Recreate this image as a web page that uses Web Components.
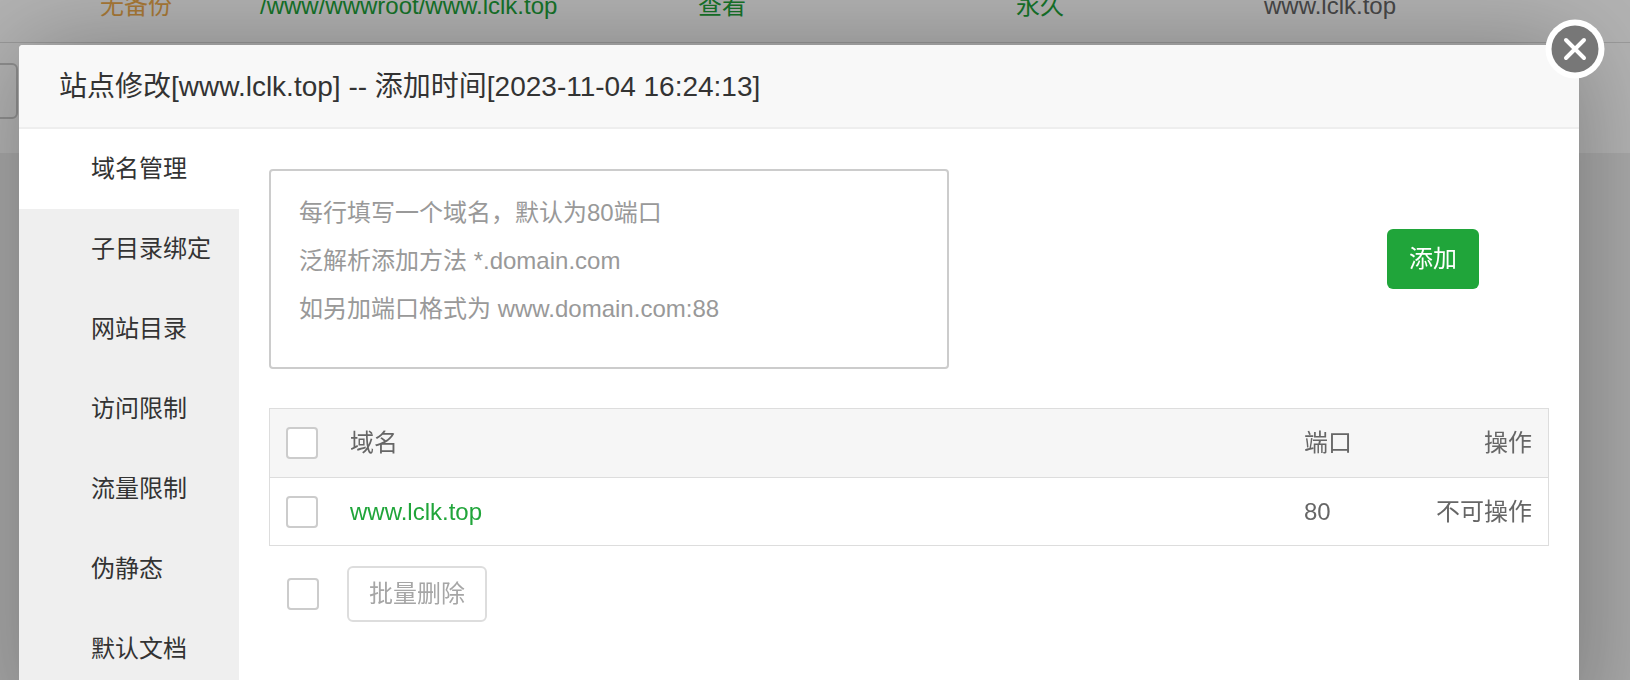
<!DOCTYPE html>
<html lang="zh-CN">
<head>
<meta charset="UTF-8">
<meta name="viewport" content="width=device-width, initial-scale=1.0">
<title>网站管理</title>
<style>
  body {
    margin: 0;
    height: 100vh;
    overflow: hidden;
    background: #f0f0f0;
    color: #666;
    font: 24px/48px "Liberation Sans", "Noto Sans CJK SC", sans-serif;
  }
</style>
</head>
<body>
  <site-list></site-list>
  <modal-layer>
    <span slot="title">站点修改[www.lclk.top] -- 添加时间[2023-11-04 16:24:13]</span>
    <tab-menu slot="menu" items="域名管理,子目录绑定,网站目录,访问限制,流量限制,伪静态,默认文档"></tab-menu>
    <domain-form></domain-form>
    <domain-table></domain-table>
  </modal-layer>

<script>
// Styled tick box shared by the table and the batch bar
const checkboxStyle = `
  input[type="checkbox"] {
    appearance: none;
    display: block;
    flex: none;
    box-sizing: border-box;
    width: 32px;
    height: 32px;
    margin: 0;
    border: 2px solid #ccc;
    border-radius: 4px;
    background: #fff;
    cursor: pointer;
  }
  input[type="checkbox"]:checked {
    background: #20a53a;
    border-color: #20a53a;
  }
`;

class SiteList extends HTMLElement {
  connectedCallback() {
    this.attachShadow({ mode: 'open' });
    this.shadowRoot.innerHTML = `
      <style>
        :host {
          display: block;
          margin-top: -30px;
          background: #fff;
        }
        table {
          width: 100%;
          table-layout: fixed;
          border-collapse: collapse;
        }
        td {
          padding: 0;
          height: 72px;
          border-bottom: 1px solid #ddd;
          white-space: nowrap;
        }
        .pick { width: 100px; }
        .backup { width: 160px; }
        .path { width: 438px; }
        .quota { width: 318px; }
        .expire { width: 248px; }
        a {
          color: #20a53a;
          text-decoration: none;
        }
        .none { color: #f0ad4e; }
        .bar {
          display: flex;
          padding: 20px 0 34px;
          margin-left: -80px;
        }
        select {
          appearance: none;
          box-sizing: border-box;
          width: 98px;
          height: 56px;
          border: 2px solid #ccc;
          border-radius: 6px;
          background: #fff;
        }
      </style>
      <table>
        <tr>
          <td class="pick"></td>
          <td class="backup"><a class="none" href="#backup">无备份</a></td>
          <td class="path"><a href="#path">/www/wwwroot/www.lclk.top</a></td>
          <td class="quota"><a href="#quota">查看</a></td>
          <td class="expire"><a href="#expire">永久</a></td>
          <td>www.lclk.top</td>
        </tr>
      </table>
      <div class="bar"><select aria-label="批量操作"></select></div>
    `;
  }
}

class ModalLayer extends HTMLElement {
  connectedCallback() {
    this.attachShadow({ mode: 'open' });
    this.shadowRoot.innerHTML = `
      <style>
        :host {
          position: fixed;
          inset: 0;
          display: block;
          padding: 45px 51px 0 19px;
          background: rgba(0, 0, 0, 0.3);
        }
        section {
          position: relative;
          display: flex;
          flex-direction: column;
          min-height: 100vh;
          border-radius: 4px;
          background: #fff;
          box-shadow: 2px 2px 100px rgba(0, 0, 0, 0.3);
        }
        h1 {
          margin: 0;
          padding: 2px 40px 0;
          border-bottom: 2px solid #eee;
          border-radius: 4px 4px 0 0;
          background: #f8f8f8;
          color: #333;
          font-size: 28px;
          font-weight: normal;
          line-height: 80px;
        }
        .body {
          flex: 1;
          display: flex;
        }
        .content {
          flex: 1;
          min-width: 0;
          padding: 40px 30px;
        }
        .close {
          position: absolute;
          top: -26px;
          right: -26px;
          padding: 0;
          border: 0;
          background: none;
          cursor: pointer;
        }
        svg { display: block; }
      </style>
      <section role="dialog" aria-labelledby="title">
        <h1 id="title"><slot name="title"></slot></h1>
        <div class="body">
          <slot name="menu"></slot>
          <div class="content"><slot></slot></div>
        </div>
        <button class="close" type="button" aria-label="关闭">
          <svg width="60" height="60" viewBox="0 0 60 60">
            <circle cx="30" cy="30" r="29.5" fill="#fff"/>
            <circle cx="30" cy="30" r="23.5" fill="#777"/>
            <path d="M21 21l18 18M39 21L21 39" stroke="#fff" stroke-width="4" stroke-linecap="round"/>
          </svg>
        </button>
      </section>
    `;

    this.shadowRoot.querySelector('.close').addEventListener('click', () => this.remove());
  }
}

class TabMenu extends HTMLElement {
  connectedCallback() {
    this.attachShadow({ mode: 'open' });
    const items = this.getAttribute('items').split(',');
    this.shadowRoot.innerHTML = `
      <style>
        :host {
          display: block;
          flex: none;
          width: 220px;
          background: #efefef;
        }
        nav {
          display: flex;
          flex-direction: column;
        }
        button {
          height: 80px;
          padding: 0 0 0 72px;
          border: 0;
          background: none;
          color: #333;
          font: inherit;
          text-align: left;
          white-space: nowrap;
          cursor: pointer;
        }
        button.active { background: #fff; }
      </style>
      <nav>
        ${items.map((item, i) => `<button type="button"${i === 0 ? ' class="active"' : ''}>${item}</button>`).join('')}
      </nav>
    `;

    const buttons = this.shadowRoot.querySelectorAll('button');
    buttons.forEach(button => {
      button.addEventListener('click', () => {
        buttons.forEach(other => other.classList.toggle('active', other === button));
      });
    });
  }
}

class DomainForm extends HTMLElement {
  connectedCallback() {
    this.attachShadow({ mode: 'open' });
    this.shadowRoot.innerHTML = `
      <style>
        :host { display: block; }
        form {
          display: flex;
          justify-content: space-between;
          align-items: flex-start;
          gap: 30px;
        }
        textarea {
          box-sizing: border-box;
          width: 680px;
          height: 200px;
          margin: 0;
          padding: 18px 28px;
          border: 2px solid #ccc;
          border-radius: 4px;
          background: #fff;
          color: #555;
          font: inherit;
          resize: none;
        }
        textarea::placeholder { color: #999; }
        button {
          flex: none;
          height: 60px;
          margin: 60px 70px 0 0;
          padding: 0 22px;
          border: 0;
          border-radius: 6px;
          background: #20a53a;
          color: #fff;
          font: inherit;
          cursor: pointer;
        }
      </style>
      <form>
        <textarea aria-label="域名" placeholder="每行填写一个域名，默认为80端口&#10;泛解析添加方法 *.domain.com&#10;如另加端口格式为 www.domain.com:88"></textarea>
        <button type="button">添加</button>
      </form>
    `;
  }
}

class DomainTable extends HTMLElement {
  connectedCallback() {
    this.attachShadow({ mode: 'open' });
    this.shadowRoot.innerHTML = `
      <style>
        ${checkboxStyle}
        :host {
          display: block;
          margin-top: 39px;
        }
        table {
          width: 100%;
          table-layout: fixed;
          border: 1px solid #ddd;
          border-spacing: 0;
        }
        th, td {
          box-sizing: border-box;
          height: 67px;
          padding: 0 16px;
          font-weight: normal;
          text-align: left;
        }
        th {
          height: 69px;
          border-bottom: 1px solid #ddd;
          background: #f6f6f6;
        }
        .pick { width: 64px; }
        .port { width: 110px; }
        .action {
          width: 150px;
          text-align: right;
        }
        a {
          color: #20a53a;
          text-decoration: none;
        }
        .batch {
          display: flex;
          align-items: center;
          gap: 28px;
          padding: 20px 18px;
        }
        .batch button {
          box-sizing: border-box;
          height: 56px;
          padding: 0 20px;
          border: 2px solid #ddd;
          border-radius: 6px;
          background: #fff;
          color: #a6a6a6;
          font: inherit;
        }
      </style>
      <table>
        <thead>
          <tr>
            <th class="pick"><input type="checkbox" aria-label="全选"></th>
            <th>域名</th>
            <th class="port">端口</th>
            <th class="action">操作</th>
          </tr>
        </thead>
        <tbody>
          <tr>
            <td><input type="checkbox" aria-label="www.lclk.top"></td>
            <td><a href="#domain">www.lclk.top</a></td>
            <td>80</td>
            <td class="action">不可操作</td>
          </tr>
        </tbody>
      </table>
      <div class="batch">
        <input type="checkbox" aria-label="全选">
        <button type="button" disabled>批量删除</button>
      </div>
    `;
  }
}

customElements.define('site-list', SiteList);
customElements.define('modal-layer', ModalLayer);
customElements.define('tab-menu', TabMenu);
customElements.define('domain-form', DomainForm);
customElements.define('domain-table', DomainTable);
</script>
</body>
</html>
